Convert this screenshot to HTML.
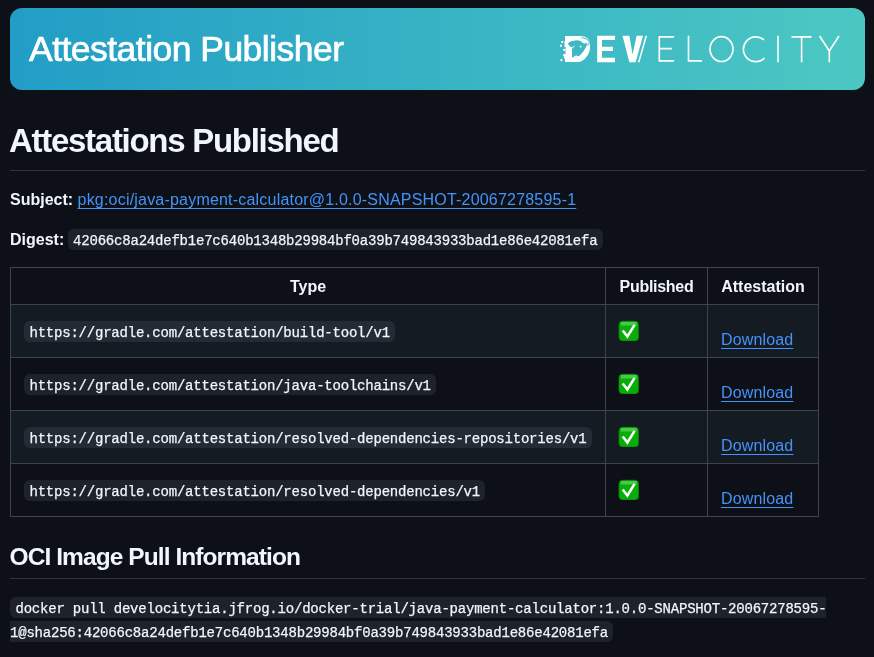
<!DOCTYPE html>
<html><head><meta charset="utf-8">
<style>
html,body{margin:0;padding:0;}
body{-webkit-font-smoothing:antialiased;width:874px;height:657px;overflow:hidden;background:#0d1117;color:#f0f6fc;font-family:"Liberation Sans",sans-serif;position:relative;}
.abs{position:absolute;white-space:nowrap;}
#banner{left:10px;top:8px;width:855px;height:82px;border-radius:12px;background:linear-gradient(90deg,#229dc6 0%,#4cc8c3 100%);}
#title{left:19px;top:0.1px;height:82px;line-height:82px;font-size:35.5px;color:#fff;letter-spacing:-0.53px;-webkit-text-stroke:0.7px #fff;}
h1,h2{margin:0;font-weight:bold;}
#h1{left:9px;top:120.8px;font-size:33px;font-weight:bold;line-height:40px;letter-spacing:-1.28px;}
.hr{position:absolute;left:10px;width:855px;height:1px;background:#2f353d;}
.lbl{font-weight:bold;font-size:16px;line-height:24px;}
a{color:#4493f8;text-decoration:underline;text-decoration-skip-ink:none;text-underline-offset:3px;}
code{display:inline-block;vertical-align:top;position:relative;height:21px;line-height:24px;font-family:"Liberation Mono",monospace;font-size:14px;letter-spacing:-0.21px;background:rgba(101,108,118,0.2);-webkit-text-stroke:0.25px #f0f6fc;border-radius:6px;padding:0 5.44px;white-space:pre;}
table{position:absolute;left:10px;top:267px;border-collapse:collapse;}
td,th{border:1px solid #3d444d;padding:0 13px;font-size:16px;line-height:24px;vertical-align:top;}
th{font-weight:bold;padding-top:6.5px;}
tr.hd{height:37px;}
tr.r{height:53px;}
td{padding-top:16px;}
td.c3{padding-top:22.7px;letter-spacing:0.15px;}
td.c2{padding-top:16px;}
.emo{display:block;position:relative;left:-1px;top:-1px;}
tr.alt td{background:#151b23;}
</style></head>
<body>
<div id="wrap" style="position:absolute;left:0;top:0;width:874px;height:657px;will-change:transform">
<div id="banner" class="abs">
  <div id="title" class="abs">Attestation Publisher</div>
</div>
<svg class="abs" style="left:0;top:0" width="874" height="100" viewBox="0 0 874 100">
<g fill="#fff">
<path d="M564 36H580C586 36 590 39 590 44L590 48C590 54 584 62 578 62H565V58.5H564V54H565.5V47H564.5V41H565V36Z"/>
<rect x="561.3" y="41" width="1.9" height="1.9"/><rect x="560" y="44.8" width="1.9" height="1.9"/><rect x="563.2" y="49" width="1.9" height="1.9"/><rect x="563" y="54.4" width="1.9" height="1.9"/><rect x="560.5" y="59.2" width="1.9" height="1.9"/>
<path d="M597.2 35.8H615V40H602V46.8H613V51H602V57.8H615V62.2H597.2Z"/>
<path d="M622.5 35.8H629.4L632.6 54.4L636.6 35.8H643.1L635.6 62.2H629.4Z"/>
<path d="M645.5 35.8H647.1L639.5 62.2H637.9Z"/>
</g>
<path d="M567.9 43.4C569.5 41.8 572 40.6 576.7 40.3C579 40.3 581.5 41 582.9 42.9L584.6 43.6C586 43.4 586.8 43 587 42.6C587 45 586.4 46.6 585 49C583.6 51.4 581.5 54 578.3 56.8C576 57.4 574 57.4 572 57.4V47.5C571.2 46.6 570.4 46.5 570 46.4C569 45.4 568.4 44.3 567.9 43.4Z" fill="#3eb9c4"/><path d="M581.5 37.8C584.5 38 587.8 39 589 41.6C589.8 43.6 588.6 45.2 586.6 45.3" fill="none" stroke="#3eb9c4" stroke-width="1"/><path d="M574.6 45.8C573.4 46.4 572.6 47.4 572 48.6" fill="none" stroke="#fff" stroke-width="0.9"/>
<circle cx="580.6" cy="46.6" r="0.9" fill="#fff"/>
<path d="M574 57.6C575 55.6 577.5 55.6 578.4 57.4" fill="none" stroke="#fff" stroke-width="1.3"/>
<g fill="none" stroke="#fff" stroke-width="1.65">
<path d="M674.1 36.8H659.3V60.8H674.1M659.3 48.6H672"/>
<path d="M688.5 35.8V60.8H701.9"/>
<ellipse cx="721.5" cy="49.1" rx="11.5" ry="12.4"/>
<path d="M764 40A12.4 12.4 0 1 0 764.4 58.2"/>
<path d="M778 35.8V62.2"/>
<path d="M791.5 36.8H811.6M801.6 36.8V62.2"/>
<path d="M819.6 36L829.3 50.9L839 36M829.3 50.9V62.2"/>
</g>
</svg>
<div id="h1" class="abs">Attestations Published</div>
<div class="hr" style="top:170px"></div>
<div class="abs lbl" style="left:10px;top:187.7px">Subject: <a style="font-weight:normal;letter-spacing:0.2px">pkg:oci/java-payment-calculator@1.0.0-SNAPSHOT-20067278595-1</a></div>
<div class="abs lbl" style="left:10px;top:228px">Digest: <code style="font-weight:normal;margin-left:-1px;top:1px">42066c8a24defb1e7c640b1348b29984bf0a39b749843933bad1e86e42081efa</code></div>
<table>
<tr class="hd"><th style="width:568px">Type</th><th style="width:75px;letter-spacing:-0.3px">Published</th><th style="width:84px">Attestation</th></tr>
<tr class="alt r"><td class="c1"><code>https://gradle.com/attestation/build-tool/v1</code></td><td class="c2"><svg class="emo" width="21" height="21" viewBox="-0.3 -0.5 21 21"><rect x="0.5" y="0.5" width="20" height="20" rx="4" fill="#09ad09" stroke="#0a5a0a" stroke-width="0.6"/><path d="M2.5 1.5h16v3.5h-16z" fill="#5fd35f" opacity="0.75"/><path d="M4.4 10L9.1 16L16.3 4.4" fill="none" stroke="#fff" stroke-width="2.5" stroke-linejoin="miter" stroke-linecap="butt"/></svg></td><td class="c3"><a>Download</a></td></tr>
<tr class="r"><td class="c1"><code>https://gradle.com/attestation/java-toolchains/v1</code></td><td class="c2"><svg class="emo" width="21" height="21" viewBox="-0.3 -0.5 21 21"><rect x="0.5" y="0.5" width="20" height="20" rx="4" fill="#09ad09" stroke="#0a5a0a" stroke-width="0.6"/><path d="M2.5 1.5h16v3.5h-16z" fill="#5fd35f" opacity="0.75"/><path d="M4.4 10L9.1 16L16.3 4.4" fill="none" stroke="#fff" stroke-width="2.5" stroke-linejoin="miter" stroke-linecap="butt"/></svg></td><td class="c3"><a>Download</a></td></tr>
<tr class="alt r"><td class="c1"><code>https://gradle.com/attestation/resolved-dependencies-repositories/v1</code></td><td class="c2"><svg class="emo" width="21" height="21" viewBox="-0.3 -0.5 21 21"><rect x="0.5" y="0.5" width="20" height="20" rx="4" fill="#09ad09" stroke="#0a5a0a" stroke-width="0.6"/><path d="M2.5 1.5h16v3.5h-16z" fill="#5fd35f" opacity="0.75"/><path d="M4.4 10L9.1 16L16.3 4.4" fill="none" stroke="#fff" stroke-width="2.5" stroke-linejoin="miter" stroke-linecap="butt"/></svg></td><td class="c3"><a>Download</a></td></tr>
<tr class="r"><td class="c1"><code>https://gradle.com/attestation/resolved-dependencies/v1</code></td><td class="c2"><svg class="emo" width="21" height="21" viewBox="-0.3 -0.5 21 21"><rect x="0.5" y="0.5" width="20" height="20" rx="4" fill="#09ad09" stroke="#0a5a0a" stroke-width="0.6"/><path d="M2.5 1.5h16v3.5h-16z" fill="#5fd35f" opacity="0.75"/><path d="M4.4 10L9.1 16L16.3 4.4" fill="none" stroke="#fff" stroke-width="2.5" stroke-linejoin="miter" stroke-linecap="butt"/></svg></td><td class="c3"><a>Download</a></td></tr>
</table>
<div class="abs" style="left:9.5px;top:542px;font-size:24.5px;line-height:30px;font-weight:bold;letter-spacing:-0.92px">OCI Image Pull Information</div>
<div class="hr" style="top:578px"></div>
<div class="abs" style="left:10px;top:597px;line-height:24px"><code style="border-radius:6px 0 0 6px;padding-right:0">docker pull develocitytia.jfrog.io/docker-trial/java-payment-calculator:1.0.0-SNAPSHOT-20067278595-</code></div>
<div class="abs" style="left:10px;top:621px;line-height:24px"><code style="border-radius:0 6px 6px 0;padding-left:0">1@sha256:42066c8a24defb1e7c640b1348b29984bf0a39b749843933bad1e86e42081efa</code></div>
</div>
</body></html>
